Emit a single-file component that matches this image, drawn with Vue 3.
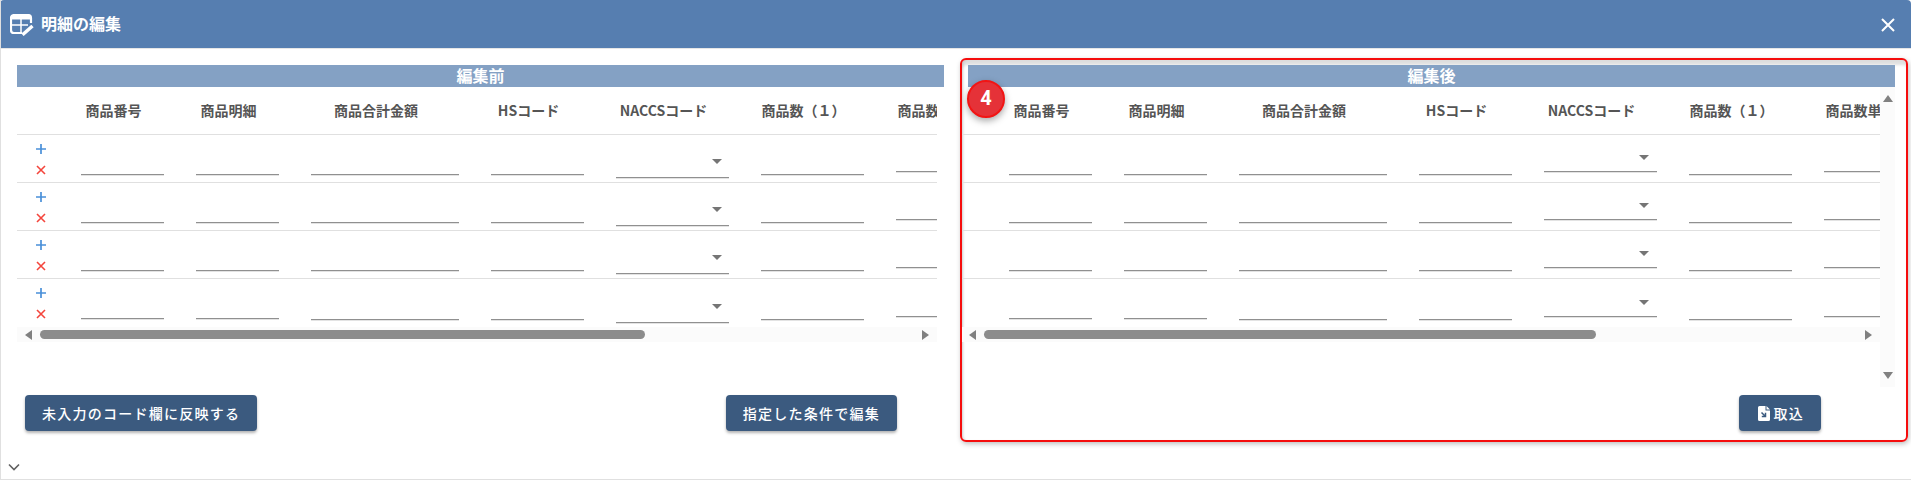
<script setup>
const columns = [
  { key: 'no', label: '商品番号' },
  { key: 'desc', label: '商品明細' },
  { key: 'total', label: '商品合計金額' },
  { key: 'hs', label: 'HSコード' },
  { key: 'naccs', label: 'NACCSコード', select: true },
  { key: 'qty', label: '商品数（１）' },
  { key: 'unit', label: '商品数単位' }
]
const rows = [1, 2, 3, 4]
const panels = [
  { id: 'before', title: '編集前', rowActions: true, actions: ['未入力のコード欄に反映する', '指定した条件で編集'] },
  { id: 'after', title: '編集後', rowActions: false, badge: '4', actions: ['取込'], importIcon: true }
]
</script>

<template>
  <div class="dialog">
    <header class="bar">
      <div class="bar-title">
        <svg class="bar-icon" viewBox="0 0 24 22" width="24" height="22" fill="none" stroke="#fff">
          <path stroke-width="2.200" d="M21 9V4a3 3 0 0 0-3-3H4a3 3 0 0 0-3 3v12a3 3 0 0 0 3 3h8" />
          <path fill="#fff" stroke="none" d="M2 2h18v3.500H2z" />
          <path stroke-width="1.500" d="M2 11h16M11 5v13" />
          <path stroke-width="3.400" d="M12.500 20.800l10-8.800" />
        </svg>
        <span class="bar-text">明細の編集</span>
      </div>
      <svg class="close" viewBox="0 0 14 14" width="14" height="14" stroke="#fff" stroke-width="2">
        <path d="M1 1l12 12M13 1L1 13" />
      </svg>
    </header>

    <main class="body">
      <section v-for="p in panels" :key="p.id" class="panel" :class="p.id">
        <div class="band">{{ p.title }}</div>
        <span v-if="p.badge" class="badge">{{ p.badge }}</span>
        <div class="content">
          <div class="table-wrap">
            <div class="row head">
              <div class="cell c-act"></div>
              <div v-for="c in columns" :key="c.key" class="cell" :class="'c-' + c.key">
                <span class="head-label">{{ c.label }}</span>
              </div>
            </div>
            <div v-for="r in rows" :key="r" class="row" :class="{ 'row-last': r === rows.length }">
              <div class="cell c-act">
                <template v-if="p.rowActions">
                  <svg class="act" viewBox="0 0 12 12" width="12" height="12" stroke="#4a90d9" stroke-width="1.700">
                    <path d="M1 6h10M6 1v10" />
                  </svg>
                  <svg class="act" viewBox="0 0 12 12" width="12" height="12" stroke="#f4453c" stroke-width="1.600">
                    <path d="M2 2l8 8M10 2l-8 8" />
                  </svg>
                </template>
              </div>
              <div v-for="c in columns" :key="c.key" class="cell" :class="'c-' + c.key">
                <div class="field">
                  <i v-if="c.select" class="caret"></i>
                </div>
              </div>
            </div>
            <div class="hscroll">
              <i class="arrow arrow-left"></i>
              <span class="thumb"></span>
              <i class="arrow arrow-right"></i>
            </div>
          </div>
          <div v-if="p.id === 'after'" class="vscroll">
            <i class="arrow arrow-up"></i>
            <i class="arrow arrow-down"></i>
          </div>
        </div>
        <div class="actions">
          <button v-for="a in p.actions" :key="a" class="btn" type="button">
            <svg v-if="p.importIcon" class="file" viewBox="0 0 12 15" width="12" height="15">
              <path fill="#fff" d="M1.500 0H7.500V4.500H12V13.500A1.500 1.500 0 0 1 10.500 15H1.500A1.500 1.500 0 0 1 0 13.500V1.500A1.500 1.500 0 0 1 1.500 0ZM8.500 0L12 3.500H8.500Z" />
              <path fill="none" stroke="#3b5a7f" stroke-width="1.500" d="M3.500 6.500l4 4M3.800 10.500h3.700V6.800" />
            </svg>
            {{ a }}
          </button>
        </div>
      </section>
    </main>

    <footer class="foot">
      <svg viewBox="0 0 12 8" width="12" height="8" fill="none" stroke="#616161" stroke-width="1.600">
        <path d="M1 1.500l5 5 5-5" />
      </svg>
    </footer>
  </div>
</template>

<style>
html, body { margin: 0; background: #fff; }
</style>

<style scoped>
.dialog {
  box-sizing: border-box;
  width: 1911px;
  height: 480px;
  border-left: 1px solid #e0e0e0;
  border-bottom: 1px solid #e0e0e0;
  background: #fff;
  font-family: "Noto Sans CJK JP", Roboto, sans-serif;
  overflow: hidden;
  display: flex;
  flex-direction: column;
}
.bar {
  flex: none;
  height: 48px;
  margin-left: -1px;
  border-radius: 4px 4px 0 0;
  background: #567eb0;
  display: flex;
  align-items: center;
  justify-content: space-between;
  padding: 0 16px 0 10px;
  color: #fff;
}
.bar-title {
  display: flex;
  align-items: center;
  gap: 7px;
  font-size: 16px;
  font-weight: 700;
}
.bar-text { padding-bottom: 2px; }
.bar-icon { margin-top: 1px; }
.close { margin-top: 1px; }
.body {
  flex: none;
  height: 393px;
  border-top: 1px solid #e6e6e6;
  box-sizing: border-box;
  display: flex;
  align-items: flex-start;
  padding: 0 3px 0 16px;
  gap: 16px;
}
.panel { position: relative; box-sizing: border-box; }
.before {
  width: 927px;
  margin-top: 16px;
}
.after {
  width: 948px;
  height: 384px;
  margin-top: 9px;
  border: 2px solid #f50d0d;
  border-radius: 6px;
  padding: 5px 11px 0 6px;
  box-shadow: inset 1px 6px 3px -1px rgba(0, 0, 0, 0.13), inset 3px 0 3px -2px rgba(0, 0, 0, 0.15), 1px 2px 5px rgba(0, 0, 0, 0.25);
}
.band {
  height: 22px;
  line-height: 20px;
  background: #84a1c4;
  color: #fff;
  font-size: 16px;
  font-weight: 700;
  text-align: center;
}
.badge {
  position: absolute;
  left: 5px;
  top: 20px;
  box-sizing: border-box;
  width: 38px;
  height: 38px;
  border: 2px solid #f21414;
  border-radius: 50%;
  background: #e53238;
  color: #fff;
  font-family: Roboto, sans-serif;
  font-size: 20px;
  font-weight: 700;
  display: flex;
  align-items: center;
  justify-content: center;
  padding-bottom: 3px;
  box-shadow: 0 3px 7px rgba(0, 0, 0, 0.35);
}
.content { display: flex; align-items: flex-start; }
.table-wrap { width: 920px; }
.after .content { margin-left: -6px; }
.after .table-wrap { width: 918px; }

.row {
  display: flex;
  box-sizing: border-box;
  height: 48px;
  border-bottom: 1px solid #e0e0e0;
  overflow: hidden;
}
.row-last { border-bottom: 0; }
.cell {
  flex: none;
  box-sizing: border-box;
  padding: 0 16px;
}
.c-act {
  width: 48px;
  padding: 8px 0 0;
  display: flex;
  flex-direction: column;
  align-items: center;
  gap: 9px;
}
.after .c-act { width: 31px; }
.c-no, .c-desc { width: 115px; }
.c-total { width: 180px; }
.c-hs { width: 125px; }
.c-naccs { width: 145px; }
.c-qty { width: 135px; }
.c-unit { width: 123px; }

.head .cell {
  display: flex;
  align-items: center;
  justify-content: center;
  padding: 0 18px 1px 0;
  white-space: nowrap;
}
.head .c-act { padding: 0; }
.head-label {
  font-size: 14px;
  line-height: 20px;
  font-weight: 700;
  color: #555;
}
.field {
  position: relative;
  display: flex;
  justify-content: flex-end;
  box-sizing: content-box;
  height: 0;
  margin-top: 39px;
  border-bottom: 1px solid #909090;
  box-shadow: 0 1px 0 rgba(144, 144, 144, 0.25);
}
.row-last .c-total .field,
.row-last .c-hs .field,
.row-last .c-qty .field { margin-top: 40px; }
.c-unit .field { margin-top: 36px; }
.row-last .c-unit .field { margin-top: 37px; }
.c-naccs .field { margin-top: 24px; height: 18px; padding-right: 7px; }
.row-last .c-naccs .field { margin-top: 25px; }
.after .c-naccs .field { margin-top: 20px; height: 16px; padding-right: 8px; }
.after .row-last .c-naccs .field { margin-top: 21px; }
.caret {
  width: 0;
  height: 0;
  border-left: 5px solid transparent;
  border-right: 5px solid transparent;
  border-top: 5px solid #757575;
}

.hscroll {
  height: 15px;
  background: #fbfbfb;
  display: flex;
  align-items: center;
  padding: 0 8px;
}
.after .hscroll { padding-left: 7px; }
.thumb {
  width: 605px;
  height: 9px;
  margin-left: 8px;
  margin-right: auto;
  border-radius: 5px;
  background: #8c8c8c;
}
.after .thumb { width: 612px; }
.arrow { display: block; width: 0; height: 0; }
.arrow-left { border-top: 5px solid transparent; border-bottom: 5px solid transparent; border-right: 7px solid #808080; }
.arrow-right { border-top: 5px solid transparent; border-bottom: 5px solid transparent; border-left: 7px solid #808080; }
.arrow-up { border-left: 5px solid transparent; border-right: 5px solid transparent; border-bottom: 7px solid #808080; }
.arrow-down { border-left: 5px solid transparent; border-right: 5px solid transparent; border-top: 7px solid #808080; }
.vscroll {
  flex: none;
  box-sizing: border-box;
  width: 15px;
  height: 300px;
  background: #fbfbfb;
  display: flex;
  flex-direction: column;
  align-items: center;
  justify-content: space-between;
  padding: 8px 0;
}

.actions {
  display: flex;
  justify-content: space-between;
  padding: 53px 47px 0 8px;
}
.after .actions {
  justify-content: flex-end;
  padding: 8px 74px 0 0;
}
.btn {
  height: 36px;
  border: 0;
  border-radius: 4px;
  padding: 0 17px 1px;
  background: #3b5a7f;
  color: #fff;
  font-family: inherit;
  font-size: 14px;
  font-weight: 500;
  letter-spacing: 1.250px;
  white-space: nowrap;
  display: flex;
  align-items: center;
  box-shadow: 0 2px 3px rgba(0, 0, 0, 0.3);
}
.file { margin: 1px 4px 0 2px; }
.foot {
  flex: 1;
  display: flex;
  align-items: flex-end;
  padding: 0 0 8px 7px;
}
</style>
